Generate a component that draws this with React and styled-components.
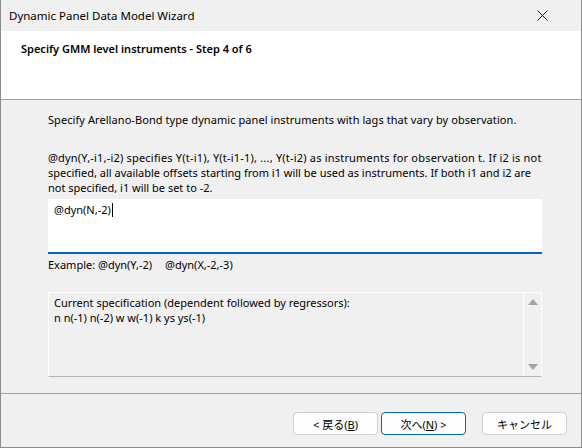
import React from 'react';
import styled, { createGlobalStyle } from 'styled-components';

const GlobalStyle = createGlobalStyle`
  html, body {
    margin: 0;
    padding: 0;
    background: #f0f0f0;
  }
  * {
    box-sizing: border-box;
  }
`

const Window = styled.div`
  width: 582px;
  height: 448px;
  display: flex;
  flex-direction: column;
  background: #f0f0f0;
  border: 1px solid #8c8c8c;
  border-top: none;
  font-family: "Noto Sans", "Noto Sans CJK JP", sans-serif;
  font-size: 11px;
  color: #000;
`

const TitleBar = styled.div`
  height: 31px;
  flex-shrink: 0;
  display: flex;
  align-items: center;
  justify-content: space-between;
  padding: 0 33px 0 8px;
  font-size: 11.5px;
`

const CloseIcon = () => (
  <svg width="11" height="11" viewBox="0 0 11 11">
    <path d="M0.5 0.5 L10.5 10.5 M10.5 0.5 L0.5 10.5" stroke="#1a1a1a" strokeWidth="1" />
  </svg>
)

const Header = styled.div`
  height: 69px;
  flex-shrink: 0;
  background: #fff;
  border-bottom: 1px solid #a0a0a0;
  padding: 10px 20px;
  font-weight: 600;
`

const Body = styled.div`
  flex: 1;
  display: flex;
  flex-direction: column;
  padding: 12px 39px 0 47px;
  line-height: 15px;
`

const Intro = styled.p`
  margin: 0 0 23px;
  letter-spacing: 0.07px;
`

const Help = styled.div`
  margin: 0 0 4px;
`

// the help text keeps the dialog's own line breaks
const HelpLine = styled.div`
  white-space: nowrap;
  letter-spacing: ${p => p.spread || 0}px;
`

const EditBox = styled.div`
  height: 55px;
  background: #fff;
  border-bottom: 2px solid #0067c0;
  padding: 3px 6px;
`

const Caret = styled.span`
  display: inline-block;
  width: 1px;
  height: 14px;
  background: #000;
  vertical-align: -3px;
  margin-left: 1px;
`

const Example = styled.div`
  margin: 3px 0 20px;
  span + span {
    margin-left: 13px;
  }
`

const SpecBox = styled.div`
  height: 85px;
  display: flex;
  border: 1px solid #fcfcfc;
  border-bottom-color: #b4b4b4;
`

const SpecText = styled.div`
  flex: 1;
  padding: 2px 5px;
`

const ScrollBar = styled.div`
  width: 18px;
  border-left: 1px solid #fcfcfc;
  display: flex;
  flex-direction: column;
  justify-content: space-between;
  align-items: center;
  padding: 6px 0 6px;
`

const Arrow = styled.div`
  width: 0;
  height: 0;
  border-left: 5px solid transparent;
  border-right: 5px solid transparent;
  ${p => p.down
    ? 'border-top: 6px solid #a3a3a3;'
    : 'border-bottom: 6px solid #a3a3a3;'}
`

const Footer = styled.div`
  height: 54px;
  flex-shrink: 0;
  border-top: 1px solid #a0a0a0;
  display: flex;
  align-items: flex-start;
  justify-content: flex-end;
  padding: 18px 14px 0 0;
`

const Button = styled.button`
  width: 85px;
  height: 23px;
  margin-left: ${p => p.gap || 0}px;
  background: #fdfdfd;
  border: 1px solid ${p => p.primary ? '#0067c0' : '#d0d0d0'};
  border-radius: 4px;
  font-family: "Noto Sans", "Noto Sans CJK JP", sans-serif;
  font-size: 11px;
  color: #000;
  padding: 0;
  u {
    text-decoration: underline;
  }
`

function App() {
  return (
    <>
      <GlobalStyle />
      <Window>
        <TitleBar>
          <span>Dynamic Panel Data Model Wizard</span>
          <CloseIcon />
        </TitleBar>
        <Header>Specify GMM level instruments - Step 4 of 6</Header>
        <Body>
          <Intro>Specify Arellano-Bond type dynamic panel instruments with lags that vary by observation.</Intro>
          <Help>
            <HelpLine spread={0.2}>@dyn(Y,-i1,-i2) specifies Y(t-i1), Y(t-i1-1), ..., Y(t-i2) as instruments for observation t. If i2 is not</HelpLine>
            <HelpLine>specified, all available offsets starting from i1 will be used as instruments. If both i1 and i2 are</HelpLine>
            <HelpLine>not specified, i1 will be set to -2.</HelpLine>
          </Help>
          <EditBox>
            @dyn(N,-2)<Caret />
          </EditBox>
          <Example>
            <span>Example: @dyn(Y,-2)</span>
            <span>@dyn(X,-2,-3)</span>
          </Example>
          <SpecBox>
            <SpecText>
              Current specification (dependent followed by regressors):<br />
              n n(-1) n(-2) w w(-1) k ys ys(-1)
            </SpecText>
            <ScrollBar>
              <Arrow />
              <Arrow down />
            </ScrollBar>
          </SpecBox>
        </Body>
        <Footer>
          <Button>&lt; 戻る(<u>B</u>)</Button>
          <Button primary gap={3}>次へ(<u>N</u>) &gt;</Button>
          <Button gap={16}>キャンセル</Button>
        </Footer>
      </Window>
    </>
  );
}
export default App;
